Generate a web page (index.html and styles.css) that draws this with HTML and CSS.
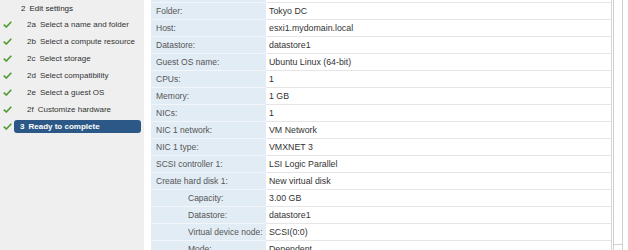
FILE: index.html
```html
<!DOCTYPE html>
<html>
<head>
<meta charset="utf-8">
<link rel="stylesheet" href="styles.css">
</head>
<body>
<div class="wizard">
  <nav class="steps">
    <div class="step step-head"><span class="num">2</span>Edit settings</div>
    <div class="step sub"><svg class="check" viewBox="0 0 9 7"><path d="M0.8 3.6 L3.3 6 L8.3 0.8"/></svg><span class="num">2a</span>Select a name and folder</div>
    <div class="step sub"><svg class="check" viewBox="0 0 9 7"><path d="M0.8 3.6 L3.3 6 L8.3 0.8"/></svg><span class="num">2b</span>Select a compute resource</div>
    <div class="step sub"><svg class="check" viewBox="0 0 9 7"><path d="M0.8 3.6 L3.3 6 L8.3 0.8"/></svg><span class="num">2c</span>Select storage</div>
    <div class="step sub"><svg class="check" viewBox="0 0 9 7"><path d="M0.8 3.6 L3.3 6 L8.3 0.8"/></svg><span class="num">2d</span>Select compatibility</div>
    <div class="step sub"><svg class="check" viewBox="0 0 9 7"><path d="M0.8 3.6 L3.3 6 L8.3 0.8"/></svg><span class="num">2e</span>Select a guest OS</div>
    <div class="step sub"><svg class="check" viewBox="0 0 9 7"><path d="M0.8 3.6 L3.3 6 L8.3 0.8"/></svg><span class="num">2f</span>Customize hardware</div>
    <div class="step current"><svg class="check" viewBox="0 0 9 7"><path d="M0.8 3.6 L3.3 6 L8.3 0.8"/></svg><span class="pill"><span class="num">3</span>Ready to complete</span></div>
  </nav>
  <main class="content">
    <div class="viewport">
      <table class="summary">
        <tr><td class="lbl">Folder:</td><td class="val">Tokyo DC</td></tr>
        <tr><td class="lbl">Host:</td><td class="val">esxi1.mydomain.local</td></tr>
        <tr><td class="lbl">Datastore:</td><td class="val">datastore1</td></tr>
        <tr><td class="lbl">Guest OS name:</td><td class="val">Ubuntu Linux (64-bit)</td></tr>
        <tr><td class="lbl">CPUs:</td><td class="val">1</td></tr>
        <tr><td class="lbl">Memory:</td><td class="val">1 GB</td></tr>
        <tr><td class="lbl">NICs:</td><td class="val">1</td></tr>
        <tr><td class="lbl">NIC 1 network:</td><td class="val">VM Network</td></tr>
        <tr><td class="lbl">NIC 1 type:</td><td class="val">VMXNET 3</td></tr>
        <tr><td class="lbl">SCSI controller 1:</td><td class="val">LSI Logic Parallel</td></tr>
        <tr><td class="lbl">Create hard disk 1:</td><td class="val">New virtual disk</td></tr>
        <tr><td class="lbl indent">Capacity:</td><td class="val">3.00 GB</td></tr>
        <tr><td class="lbl indent">Datastore:</td><td class="val">datastore1</td></tr>
        <tr><td class="lbl indent">Virtual device node:</td><td class="val">SCSI(0:0)</td></tr>
        <tr><td class="lbl indent">Mode:</td><td class="val">Dependent</td></tr>
      </table>
    </div>
    <div class="scrollbar"><div class="track"></div><div class="arrow"></div></div>
  </main>
</div>
</body>
</html>
```

FILE: styles.css
```css
html, body {
  margin: 0;
  padding: 0;
  background: #ffffff;
}
body {
  font-family: "Liberation Sans", Arial, sans-serif;
  font-size: 8px;
  color: #333;
}
.wizard {
  display: flex;
  height: 250px;
  overflow: hidden;
}
.steps {
  width: 144px;
  flex: none;
  background: #efefef;
  display: flex;
  flex-direction: column;
}
.step {
  height: 17px;
  display: flex;
  align-items: center;
  white-space: nowrap;
  color: #333;
  font-size: 8px;
}
.step-head {
  height: 16px;
  padding-left: 21px;
  color: #1f1f1f;
}
.step-head .num { margin-right: 4px; }
.sub .num { margin-right: 4px; }
.check {
  width: 9px;
  height: 7px;
  margin: 0 15px 0 3px;
  flex: none;
}
.check path {
  fill: none;
  stroke: #4f9b2f;
  stroke-width: 1.6;
}
.current .check { margin-right: 2px; }
.pill {
  display: flex;
  align-items: center;
  height: 13px;
  width: 121px;
  padding-left: 6px;
  border-radius: 3px;
  background: #2b5887;
  color: #ffffff;
  font-weight: bold;
}
.pill .num { margin-right: 4px; }
.content {
  flex: none;
  display: flex;
  margin-left: 7px;
  height: 250px;
}
.viewport {
  width: 460px;
  height: 248px;
  padding-top: 2px;
  overflow: hidden;
  border-right: 1px solid #d6d6d6;
  background: linear-gradient(to right, #e2ecf5 115px, #ffffff 115px);
}
.summary {
  border-collapse: collapse;
  width: 100%;
  font-size: 8.5px;
}
.summary tr:first-child td {
  border-top: 1px solid #e5e5e5;
}
.summary tr:first-child .lbl {
  border-top-color: #f2f6fa;
}
.summary td {
  height: 16px;
  padding: 0;
  vertical-align: middle;
  white-space: nowrap;
}
.lbl {
  width: 110px;
  padding-left: 5px !important;
  background: #e2ecf5;
  color: #555;
  border-bottom: 1px solid #f2f6fa;
}
.lbl.indent {
  padding-left: 37px !important;
  width: 78px;
}
.val {
  padding-left: 3px !important;
  color: #333;
  font-size: 8.8px;
  border-bottom: 1px solid #e5e5e5;
}
.scrollbar {
  width: 8px;
  margin-left: 1px;
  border-left: 1px solid #cfcfcf;
  border-right: 1px solid #cfcfcf;
  display: flex;
  flex-direction: column;
}
.track { flex: 1; }
.arrow {
  height: 5px;
  border-top: 1px solid #d0d0d0;
}
```
